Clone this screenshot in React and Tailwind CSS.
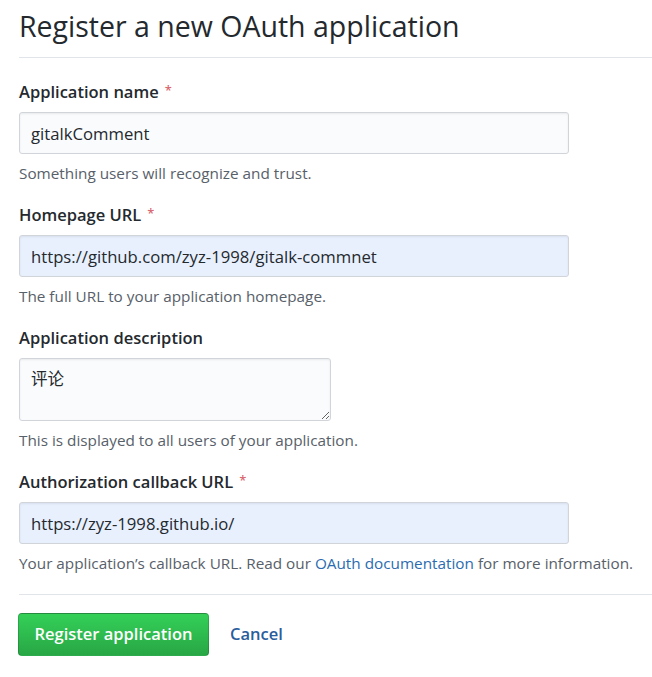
import React from "react";

const Field = ({ label, required, children, help }) => (
  <div className="flex flex-col">
    <label className="h-[24px] mb-[8px] flex items-center text-[16.5px] font-semibold text-[#24292e]">
      {label}
      {required && <span className="ml-[6px] self-start mt-[1px] text-[13px] text-[#cb2431]/70">*</span>}
    </label>
    {children}
    <p className="mt-[8px] leading-[22px] text-[15.3px] text-[#586069]">{help}</p>
  </div>
);

const inputCls =
  "h-[42px] w-[550px] rounded-[3px] border border-[#d1d5da] px-[11px] text-[16.7px] text-[#24292e] shadow-[inset_0_1px_2px_rgba(27,31,35,0.075)] outline-none";

const App = () => {
  return (
    <div className="min-h-screen bg-white pl-[19px] font-['Open_Sans',sans-serif] text-[#24292e]">
      {/* page heading */}
      <div className="pt-[6px] pb-[11px] border-b border-[#e1e4e8]">
        <h1 className="text-[28.5px] leading-[40px] font-normal">Register a new OAuth application</h1>
      </div>

      <form className="pt-[22px]" onSubmit={(e) => e.preventDefault()}>
        <Field label="Application name" required help="Something users will recognize and trust.">
          <input className={`${inputCls} bg-[#fafbfc]`} value="gitalkComment" readOnly />
        </Field>

        <div className="mt-[19px]">
          <Field label="Homepage URL" required help="The full URL to your application homepage.">
            <input
              className={`${inputCls} bg-[#e8f0fe]`}
              value="https://github.com/zyz-1998/gitalk-commnet"
              readOnly
            />
          </Field>
        </div>

        <div className="mt-[19px]">
          <Field label="Application description" help="This is displayed to all users of your application.">
            <textarea
              className="h-[63px] w-[312px] rounded-[3px] border border-[#d1d5da] bg-[#fafbfc] px-[11px] py-[9px] text-[16.5px] leading-[22px] text-[#24292e] shadow-[inset_0_1px_2px_rgba(27,31,35,0.075)] outline-none font-['Open_Sans','Noto_Sans_CJK_SC',sans-serif]"
              value="评论"
              readOnly
            />
          </Field>
        </div>

        <div className="mt-[19px]">
          <Field
            label="Authorization callback URL"
            required
            help={
              <>
                Your application’s callback URL. Read our{" "}
                <a href="#" className="text-[#2b6cb0]">OAuth documentation</a> for more information.
              </>
            }
          >
            <input className={`${inputCls} bg-[#e8f0fe]`} value="https://zyz-1998.github.io/" readOnly />
          </Field>
        </div>

        <div className="mt-[20px] border-t border-[#e1e4e8] pt-[18px] flex items-center">
          <button
            type="submit"
            className="h-[43px] w-[191px] -ml-[1px] rounded-[4px] border border-[rgba(27,31,35,0.2)] bg-gradient-to-b from-[#34d058] to-[#28a745] text-[16.5px] font-semibold text-white"
          >
            Register application
          </button>
          <a href="#" className="ml-[21px] text-[16.5px] font-semibold text-[#2a5d9c]">
            Cancel
          </a>
        </div>
      </form>
    </div>
  );
};

export default App;
